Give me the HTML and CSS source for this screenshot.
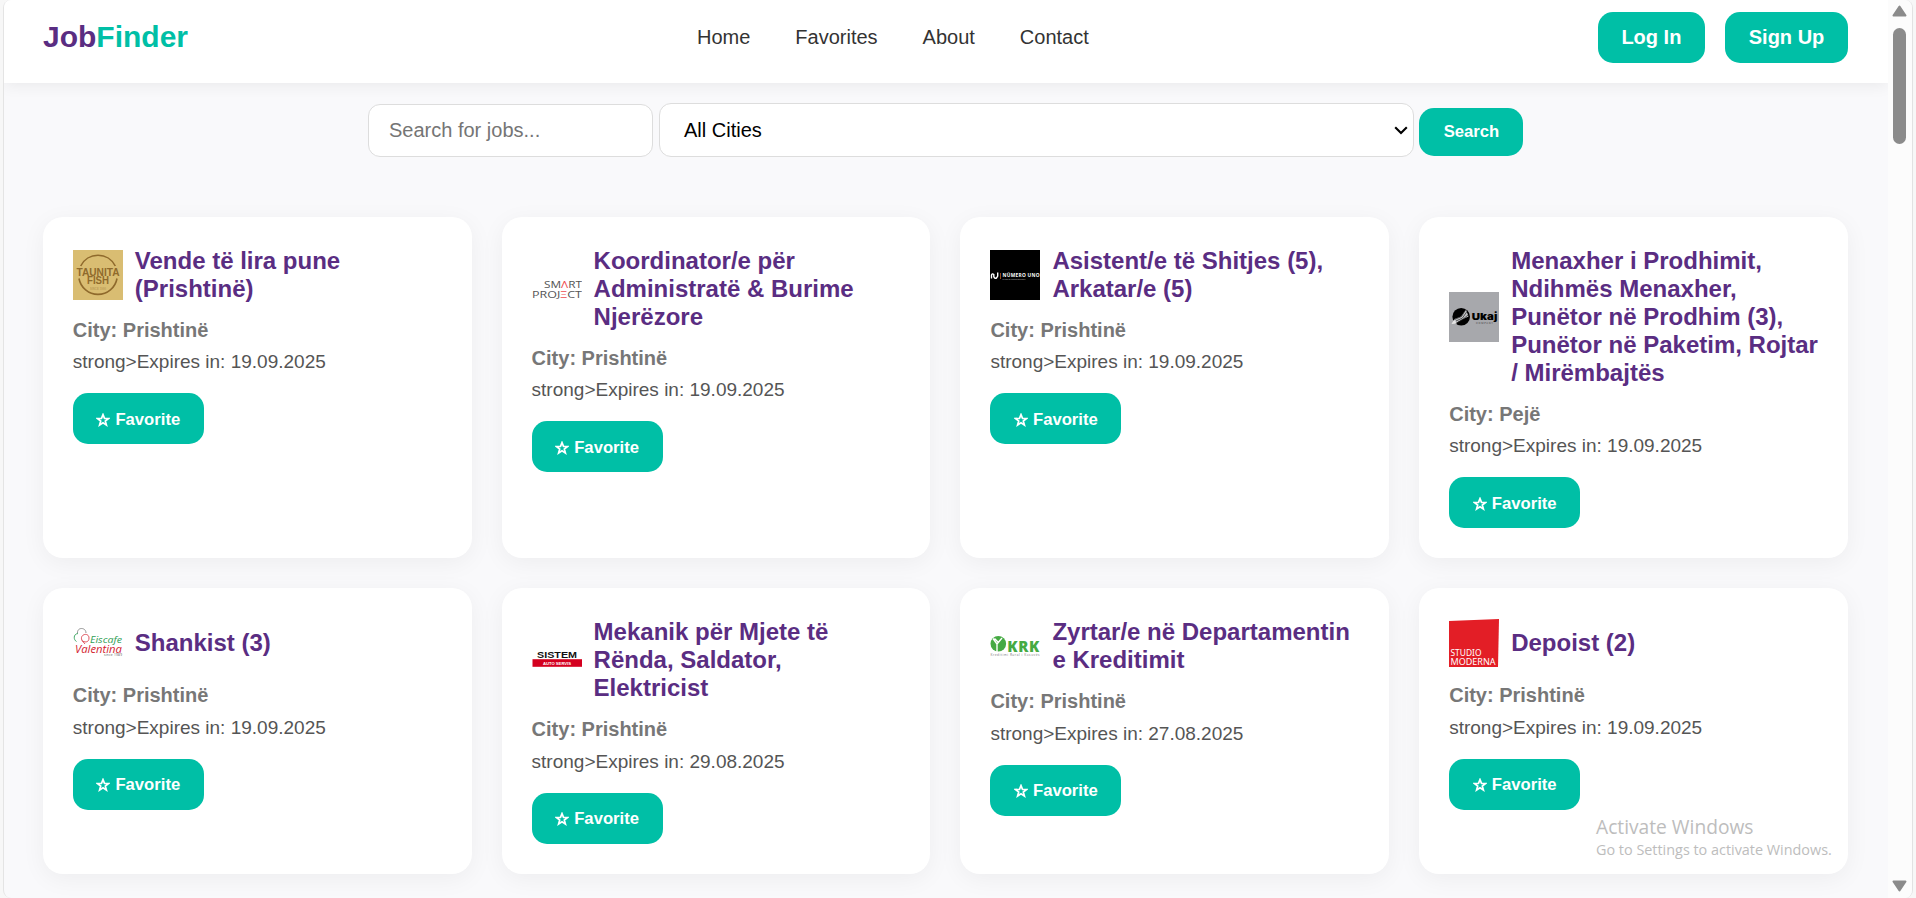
FILE: index.html
```html
<!DOCTYPE html>
<html lang="en">
<head>
<meta charset="utf-8">
<title>JobFinder</title>
<link rel="stylesheet" href="styles.css">
</head>
<body>
<div class="window">
  <div class="page">
    <header class="header">
      <div class="brand">Job<span class="brand-accent">Finder</span></div>
      <nav class="nav"><a>Home</a><a>Favorites</a><a>About</a><a>Contact</a></nav>
      <div class="auth"><a class="btn btn-lg">Log In</a><a class="btn btn-lg">Sign Up</a></div>
    </header>
    <form class="search">
      <input class="search-input" type="text" placeholder="Search for jobs...">
      <div class="search-select"><span>All Cities</span>
        <svg class="chevron" width="14" height="9" viewBox="0 0 14 9"><path d="M1.2 1.2 L7 7 L12.8 1.2" fill="none" stroke="#000" stroke-width="2.1"/></svg>
      </div>
      <button class="btn search-btn" type="button">Search</button>
    </form>
    <main class="grid">
      <article class="card">
        <div class="card-head">
          <svg class="logo" viewBox="0 0 50 50"><rect width="50" height="50" fill="#d9bd72"/><g fill="none" stroke="#8f6a2c" stroke-width="1.6"><path d="M7.700 16 A19.300 19.300 0 0 1 42.300 16"/><path d="M6 28.500 A19.300 19.300 0 0 0 44 28.500"/></g><g class="lt" fill="#8f6a2c" font-weight="700" font-size="10.5"><text x="3.500" y="25.700" textLength="43" lengthAdjust="spacingAndGlyphs">TAUNITA</text><text x="14" y="34.200" textLength="22" lengthAdjust="spacingAndGlyphs">FISH</text><text x="17" y="39.500" opacity=".4" font-size="2.6" textLength="16">SINCE 1990</text></g></svg>
          <h3 class="title">Vende të lira pune (Prishtinë)</h3>
        </div>
        <p class="city">City: Prishtinë</p>
        <p class="expires">strong&gt;Expires in: 19.09.2025</p>
        <button class="btn fav"><svg class="star" viewBox="0 0 14 14"><path d="M7 1.6 L8.5 5.4 L12.5 5.5 L9.3 8 L10.4 12 L7 9.7 L3.6 12 L4.7 8 L1.5 5.5 L5.5 5.4 Z"/></svg>Favorite</button>
      </article>
      <article class="card">
        <div class="card-head">
          <svg class="logo" viewBox="0 0 50 50"><g class="li" font-size="9.8" fill="#555"><text x="12" y="23.700" textLength="38" lengthAdjust="spacingAndGlyphs">SM<tspan fill="#ee4c50">Λ</tspan>RT</text><text x="0" y="33.900" textLength="50" lengthAdjust="spacingAndGlyphs">PROJ<tspan fill="#ee4c50">Ξ</tspan>CT</text></g></svg>
          <h3 class="title">Koordinator/e për Administratë &amp; Burime Njerëzore</h3>
        </div>
        <p class="city">City: Prishtinë</p>
        <p class="expires">strong&gt;Expires in: 19.09.2025</p>
        <button class="btn fav"><svg class="star" viewBox="0 0 14 14"><path d="M7 1.6 L8.5 5.4 L12.5 5.5 L9.3 8 L10.4 12 L7 9.7 L3.6 12 L4.7 8 L1.5 5.5 L5.5 5.4 Z"/></svg>Favorite</button>
      </article>
      <article class="card">
        <div class="card-head">
          <svg class="logo" viewBox="0 0 50 50"><rect width="50" height="50"/><path d="M1.500 28.500 V25 Q2.200 23 3.800 24.500 V26.500 Q4.500 29 6.500 28 L7.700 26 V22.500" fill="none" stroke="#fff" stroke-width="1.4"/><path d="M10.5 23V29" stroke="#d66a2c" stroke-width=".7"/><g class="li" fill="#fff"><text x="12.5" y="27" font-size="4.8" font-weight="700" textLength="37">NÜMERO UNO</text><text x="12.5" y="29.6" font-size="2" opacity=".7" textLength="23">SALES &amp; DISTRIBUTION</text></g></svg>
          <h3 class="title">Asistent/e të Shitjes (5), Arkatar/e (5)</h3>
        </div>
        <p class="city">City: Prishtinë</p>
        <p class="expires">strong&gt;Expires in: 19.09.2025</p>
        <button class="btn fav"><svg class="star" viewBox="0 0 14 14"><path d="M7 1.6 L8.5 5.4 L12.5 5.5 L9.3 8 L10.4 12 L7 9.7 L3.6 12 L4.7 8 L1.5 5.5 L5.5 5.4 Z"/></svg>Favorite</button>
      </article>
      <article class="card">
        <div class="card-head">
          <svg class="logo" viewBox="0 0 50 50"><rect width="50" height="50" fill="#a7a8ac"/><circle cx="12.2" cy="24.8" r="8.8"/><path d="M3 31.500 L5.500 27 L12 24.500 L17 17.500 L19.500 24.500 L13 27.500 L8 30.500 Z" fill="#c4c5c8"/><path d="M5.500 27.500 L12.500 24.500 L16.500 18 M7 29 L13.500 26 L18 19.500 M8.500 30.500 L14 27.300 L19 23" fill="none" stroke="#222" stroke-width=".7"/><path d="M2.5 32 L5 28 L8 31.5 Z" fill="#e4e4e4"/><g class="lw"><text x="22.800" y="28" font-size="9.600" font-weight="900" textLength="25.5" lengthAdjust="spacingAndGlyphs">Ukaj</text><text x="27" y="32" font-size="2.5" fill="#444" textLength="17">COMPANY</text></g></svg>
          <h3 class="title">Menaxher i Prodhimit, Ndihmës Menaxher, Punëtor në Prodhim (3), Punëtor në Paketim, Rojtar / Mirëmbajtës</h3>
        </div>
        <p class="city">City: Pejë</p>
        <p class="expires">strong&gt;Expires in: 19.09.2025</p>
        <button class="btn fav"><svg class="star" viewBox="0 0 14 14"><path d="M7 1.6 L8.5 5.4 L12.5 5.5 L9.3 8 L10.4 12 L7 9.7 L3.6 12 L4.7 8 L1.5 5.5 L5.5 5.4 Z"/></svg>Favorite</button>
      </article>
      <article class="card">
        <div class="card-head">
          <svg class="logo" viewBox="0 0 50 50"><g fill="none" stroke-width=".9"><path d="M4.500 15 C4 9 13 9 13 15" stroke="#888"/><path d="M5 15.500 C0 16 .5 22 3.500 23.500" stroke="#2f9e56"/><path d="M9 22.500 C6 16 16 14 16 20 C16 25 11 24.500 9 22.500 L12 26" stroke="#d9434e"/></g><g class="li" font-style="italic"><text x="17" y="25" font-size="8.500" fill="#2f9e56" textLength="32" lengthAdjust="spacingAndGlyphs">Eiscafe</text><text x="2" y="34.500" font-size="11" fill="#d3222f" textLength="47" lengthAdjust="spacingAndGlyphs">Valentina</text><text x="31" y="38.300" font-size="3.200" font-style="normal" fill="#555" textLength="18">since 1989</text></g></svg>
          <h3 class="title">Shankist (3)</h3>
        </div>
        <p class="city">City: Prishtinë</p>
        <p class="expires">strong&gt;Expires in: 19.09.2025</p>
        <button class="btn fav"><svg class="star" viewBox="0 0 14 14"><path d="M7 1.6 L8.5 5.4 L12.5 5.5 L9.3 8 L10.4 12 L7 9.7 L3.6 12 L4.7 8 L1.5 5.5 L5.5 5.4 Z"/></svg>Favorite</button>
      </article>
      <article class="card">
        <div class="card-head">
          <svg class="logo" viewBox="0 0 50 50"><rect x=".5" y="24.200" width="49.500" height="7.600" fill="#d4001f"/><g class="lt" font-weight="700"><text x="5" y="23.200" font-size="9.500" fill="#111" textLength="40" lengthAdjust="spacingAndGlyphs">SISTEM</text><text x="11" y="29.500" font-size="4.300" fill="#fff" textLength="28" lengthAdjust="spacingAndGlyphs">AUTO SERVIS</text></g></svg>
          <h3 class="title">Mekanik për Mjete të Rënda, Saldator, Elektricist</h3>
        </div>
        <p class="city">City: Prishtinë</p>
        <p class="expires">strong&gt;Expires in: 29.08.2025</p>
        <button class="btn fav"><svg class="star" viewBox="0 0 14 14"><path d="M7 1.6 L8.5 5.4 L12.5 5.5 L9.3 8 L10.4 12 L7 9.7 L3.6 12 L4.7 8 L1.5 5.5 L5.5 5.4 Z"/></svg>Favorite</button>
      </article>
      <article class="card">
        <div class="card-head">
          <svg class="logo" viewBox="0 0 50 50"><circle cx="8.300" cy="22.800" r="7.800" fill="#45aa43"/><path d="M3 17.500 L7 23 V31 M7 23 L12 17 M4.500 17.500 L8 21" fill="none" stroke="#fff" stroke-width="1.400"/><g class="li"><text x="17.300" y="30.800" font-size="15" font-weight="800" fill="#45aa43" textLength="32" lengthAdjust="spacing">KRK</text><text x=".5" y="34.800" font-size="3.200" fill="#777" textLength="49">Kreditimi Rural i Kosovës</text></g></svg>
          <h3 class="title">Zyrtar/e në Departamentin e Kreditimit</h3>
        </div>
        <p class="city">City: Prishtinë</p>
        <p class="expires">strong&gt;Expires in: 27.08.2025</p>
        <button class="btn fav"><svg class="star" viewBox="0 0 14 14"><path d="M7 1.6 L8.5 5.4 L12.5 5.5 L9.3 8 L10.4 12 L7 9.7 L3.6 12 L4.7 8 L1.5 5.5 L5.5 5.4 Z"/></svg>Favorite</button>
      </article>
      <article class="card">
        <div class="card-head">
          <svg class="logo" viewBox="0 0 50 50"><path d="M0 3 L50 1 L49 49 H0 Z" fill="#e31e26"/><g class="ls" fill="#fff" font-size="9.6"><text x="1.500" y="38" textLength="31" lengthAdjust="spacingAndGlyphs">STUDIO</text><text x="1.500" y="47.300" textLength="45" lengthAdjust="spacingAndGlyphs">MODERNA</text></g></svg>
          <h3 class="title">Depoist (2)</h3>
        </div>
        <p class="city">City: Prishtinë</p>
        <p class="expires">strong&gt;Expires in: 19.09.2025</p>
        <button class="btn fav"><svg class="star" viewBox="0 0 14 14"><path d="M7 1.6 L8.5 5.4 L12.5 5.5 L9.3 8 L10.4 12 L7 9.7 L3.6 12 L4.7 8 L1.5 5.5 L5.5 5.4 Z"/></svg>Favorite</button>
      </article>
    </main>
  </div>
  <div class="scrollbar">
    <svg width="15" height="12" viewBox="0 0 15 12"><path d="M7.500 1.500 L13.500 10.500 H1.500 Z" fill="#8b8b8b" stroke="#8b8b8b" stroke-width="2" stroke-linejoin="round"/></svg>
    <div class="thumb"></div>
    <svg class="down" width="15" height="12" viewBox="0 0 15 12"><path d="M7.500 10.500 L13.500 1.500 H1.500 Z" fill="#8b8b8b" stroke="#8b8b8b" stroke-width="2" stroke-linejoin="round"/></svg>
  </div>
</div>
<div class="watermark">
  <div class="wm-title">Activate Windows</div>
  <div class="wm-sub">Go to Settings to activate Windows.</div>
</div>
</body>
</html>
```
FILE: styles.css
```css
* { box-sizing: border-box; }
body {
  margin: 0;
  height: 898px;
  overflow: hidden;
  background: #f7f7f7;
  font-family: "Liberation Sans", Arial, sans-serif;
}
.window {
  display: flex;
  width: 1910px;
  height: 898px;
  margin-left: 3px;
  border-left: 1px solid #e4e4e4;
  border-right: 1px solid #e2e2e2;
  border-radius: 8px;
  overflow: hidden;
  background: #f9f9fb;
}
.page { width: 1884px; height: 898px; overflow: hidden; }
.header {
  display: flex;
  justify-content: space-between;
  align-items: flex-start;
  height: 83px;
  padding: 12px 40px 0 39px;
  background: #fff;
  box-shadow: 0 2px 15px rgba(0, 0, 0, .07);
}
.brand { font-size: 30px; line-height: 34px; font-weight: 700; color: #5a2d82; margin-top: 8px; }
.brand-accent { color: #00bfa6; }
.nav { display: flex; gap: 45px; font-size: 20px; line-height: 24px; color: #333; margin-top: 13px; }
.auth { display: flex; justify-content: flex-end; gap: 20px; }
.btn {
  display: inline-flex;
  align-items: center;
  justify-content: center;
  border: 0;
  border-radius: 15px;
  background: #00bfa6;
  color: #fff;
  font-family: inherit;
  font-weight: 700;
  font-size: 16.667px;
  padding: 0 24px;
  height: 51px;
}
.btn-lg { font-size: 20px; padding: 0 23.700px; }
.search { display: flex; align-items: flex-start; margin: 20px 0 0 364px; height: 54px; }
.search-input {
  width: 285px;
  height: 53px;
  margin-top: 1px;
  padding: 0 20px;
  border: 1px solid #ddd;
  border-radius: 12px;
  background: #fff;
  font: 20px "Liberation Sans", Arial, sans-serif;
}
.search-input::placeholder { color: #757575; opacity: 1; }
.search-select {
  display: flex;
  align-items: center;
  justify-content: space-between;
  width: 755px;
  height: 54px;
  margin-left: 6px;
  padding: 0 5px 0 24px;
  border: 1px solid #ddd;
  border-radius: 12px;
  background: #fff;
  font-size: 20px;
}
.search-btn { height: 48px; margin: 5px 0 0 5px; width: 104px; padding: 0 0 0 1px; }
.grid {
  display: grid;
  grid-template-columns: repeat(4, 1fr);
  gap: 30px;
  margin-top: 60px;
  padding: 0 40px 0 38.800px;
}
.card {
  padding: 30px;
  border-radius: 20px;
  background: #fff;
  box-shadow: 0 5px 25px rgba(0, 0, 0, .05);
}
.card-head { display: flex; align-items: center; gap: 12px; }
.logo { width: 50px; height: 50px; flex: none; }
.lt { font-family: "Liberation Sans", sans-serif; }
.li { font-family: "Open Sans", sans-serif; }
.ls { font-family: "Noto Sans", sans-serif; }
.lw { font-family: Inter, sans-serif; }
.title { margin: 0; font-size: 24px; line-height: 28px; font-weight: 700; color: #5a2d82; }
.city { margin: 16px 0 0; font-size: 20px; line-height: 23px; font-weight: 700; color: #777; }
.expires { margin: 9.400px 0 0; font-size: 19px; line-height: 22px; color: #555; }
.fav { margin-top: 20px; width: 131px; gap: 5px; display: flex; padding: 2px 0 0; }
.star { width: 14px; height: 14px; fill: none; stroke: #fff; stroke-width: 1.700; }
.scrollbar {
  display: flex;
  flex-direction: column;
  align-items: center;
  width: 24px;
  height: 898px;
  padding: 5px 1px 6px 0;
  background: #fcfcfc;
}
.scrollbar svg { flex: none; }
.thumb { width: 13px; height: 116px; margin-top: 11px; border-radius: 7px; background: #8b8b8b; }
.down { margin-top: auto; }
.watermark {
  position: absolute;
  left: 1596px;
  top: 814px;
  color: #bdbdbd;
  font-family: "Open Sans", "Noto Sans", sans-serif;
  white-space: nowrap;
}
.wm-title { font-size: 19.200px; line-height: 26px; }
.wm-sub { font-size: 14.400px; line-height: 20px; }
```
